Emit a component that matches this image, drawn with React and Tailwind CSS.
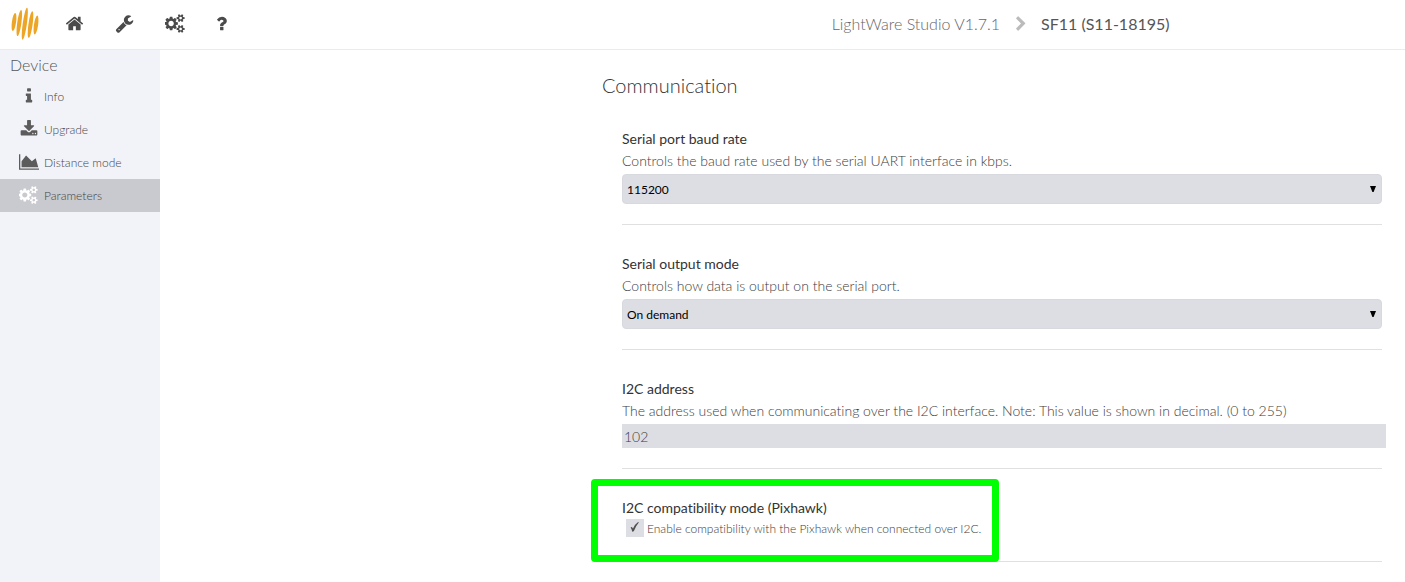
import { useState } from "react";

const ICONS = {
  home: {
    box: "0 0 1792 1792",
    d: "M1472 992v480q0 26-19 45t-45 19h-384v-384h-256v384h-384q-26 0-45-19t-19-45v-480q0-1 .5-3t.5-3l575-474 575 474q1 2 1 6zm223-69l-62 74q-8 9-21 11h-3q-13 0-21-7l-692-577-692 577q-12 8-24 7-13-2-21-11l-62-74q-8-10-7-23.5t11-21.5l719-599q32-26 76-26t76 26l244 204v-195q0-14 9-23t23-9h192q14 0 23 9t9 23v408l219 182q10 8 11 21.5t-7 23.5z",
  },
  wrench: {
    box: "0 0 1792 1792",
    d: "M448 1472q0-26-19-45t-45-19-45 19-19 45 19 45 45 19 45-19 19-45zm644-420l-682 682q-37 37-90 37-52 0-91-37l-106-108q-38-36-38-90 0-53 38-91l681-681q39 98 114.5 173.5t173.5 114.5zm634-435q0 39-23 106-47 134-164.5 217.5t-258.5 83.5q-185 0-316.5-131.5t-131.5-316.5 131.5-316.5 316.5-131.5q58 0 121.5 16.5t107.5 46.5q16 11 16 28t-16 28l-293 169v224l193 107q5-3 79-48.5t135.5-81 70.5-35.5q15 0 23.5 10t8.5 25z",
  },
  cogs: {
    box: "0 0 1920 1792",
    d: "M832 896q0-106-75-181t-181-75-181 75-75 181 75 181 181 75 181-75 75-181zm768 512q0-52-38-90t-90-38-90 38-38 90q0 53 37.5 90.5t90.5 37.5 90.5-37.5 37.5-90.5zm0-1024q0-52-38-90t-90-38-90 38-38 90q0 53 37.5 90.5t90.5 37.5 90.5-37.5 37.5-90.5zm-384 421v185q0 10-7 19.5t-16 10.5l-155 24q-11 35-32 76 34 48 90 115 7 11 7 20 0 12-7 19-23 30-82.5 89.5t-78.5 59.5q-11 0-21-7l-115-90q-37 19-77 31-11 108-23 155-7 24-30 24h-186q-11 0-20-7.5t-10-17.5l-23-153q-34-10-75-31l-118 89q-7 7-20 7-11 0-21-8-144-133-144-160 0-9 7-19 10-14 41-53t47-61q-23-44-35-82l-152-24q-10-1-17-9.5t-7-19.5v-185q0-10 7-19.5t16-10.5l155-24q11-35 32-76-34-48-90-115-7-11-7-20 0-12 7-20 22-30 82-89t79-59q11 0 21 7l115 90q34-18 77-32 11-108 23-154 7-24 30-24h186q11 0 20 7.5t10 17.5l23 153q34 10 75 31l118-89q8-7 20-7 11 0 21 8 144 133 144 160 0 8-7 19-12 16-42 54t-45 60q23 48 34 82l152 23q10 2 17 10.5t7 19.5zm640 533v140q0 16-149 31-12 27-30 52 51 113 51 138 0 4-4 7-122 71-124 71-8 0-46-47t-52-68q-20 2-30 2t-30-2q-14 21-52 68t-46 47q-2 0-124-71-4-3-4-7 0-25 51-138-18-25-30-52-149-15-149-31v-140q0-16 149-31 13-29 30-52-51-113-51-138 0-4 4-7 4-2 35-20t59-34 30-16q8 0 46 46.5t52 67.5q20-2 30-2t30 2q51-71 92-112l6-2q4 0 124 70 4 3 4 7 0 25-51 138 17 23 30 52 149 15 149 31zm0-1024v140q0 16-149 31-12 27-30 52 51 113 51 138 0 4-4 7-122 71-124 71-8 0-46-47t-52-68q-20 2-30 2t-30-2q-14 21-52 68t-46 47q-2 0-124-71-4-3-4-7 0-25 51-138-18-25-30-52-149-15-149-31v-140q0-16 149-31 13-29 30-52-51-113-51-138 0-4 4-7 4-2 35-20t59-34 30-16q8 0 46 46.5t52 67.5q20-2 30-2t30 2q51-71 92-112l6-2q4 0 124 70 4 3 4 7 0 25-51 138 17 23 30 52 149 15 149 31z",
  },
  question: {
    box: "384 0 1024 1792",
    d: "M1088 1256v240q0 16-12 28t-28 12h-240q-16 0-28-12t-12-28v-240q0-16 12-28t28-12h240q16 0 28 12t12 28zm316-600q0 54-15.5 101t-35 76.5-55 59.5-57.5 43.5-61 35.5q-41 23-68.5 65t-27.5 67q0 17-12 32.5t-28 15.5h-240q-15 0-25.5-18.5t-10.5-37.5v-45q0-83 65-156.5t143-108.5q59-27 84-56t25-76q0-42-46.5-74t-107.5-32q-65 0-108 29-35 25-107 115-13 16-31 16-12 0-25-8l-164-125q-13-10-15.5-25t5.5-28q160-266 464-266 80 0 161 31t146 83 106 127.5 41 158.5z",
  },
  info: {
    box: "0 0 1792 1792",
    d: "M1216 1344v128q0 26-19 45t-45 19h-512q-26 0-45-19t-19-45v-128q0-26 19-45t45-19h64v-384h-64q-26 0-45-19t-19-45v-128q0-26 19-45t45-19h384q26 0 45 19t19 45v576h64q26 0 45 19t19 45zm-128-1152v192q0 26-19 45t-45 19h-256q-26 0-45-19t-19-45v-192q0-26 19-45t45-19h256q26 0 45 19t19 45z",
  },
  download: {
    box: "0 0 1792 1792",
    d: "M1344 1344q0-26-19-45t-45-19-45 19-19 45 19 45 45 19 45-19 19-45zm256 0q0-26-19-45t-45-19-45 19-19 45 19 45 45 19 45-19 19-45zm128-224v320q0 40-28 68t-68 28h-1472q-40 0-68-28t-28-68v-320q0-40 28-68t68-28h465l135 136q58 56 136 56t136-56l136-136h464q40 0 68 28t28 68zm-325-569q17 41-14 70l-448 448q-18 19-45 19t-45-19l-448-448q-31-29-14-70 17-39 59-39h256v-448q0-26 19-45t45-19h256q26 0 45 19t19 45v448h256q42 0 59 39z",
  },
  chart: {
    box: "0 0 2048 1792",
    d: "M2048 1536v128h-2048v-1536h128v1408h1920zm-384-1024l256 896h-1664v-576l448-576 576 576z",
  },
  chevron: {
    box: "0 0 1792 1792",
    d: "M1363 877l-742 742q-19 19-45 19t-45-19l-166-166q-19-19-19-45t19-45l531-531-531-531q-19-19-19-45t19-45l166-166q19-19 45-19t45 19l742 742q19 19 19 45t-19 45z",
  },
};

function Icon({ name, className }) {
  const icon = ICONS[name];
  return (
    <svg viewBox={icon.box} className={`w-auto shrink-0 fill-current ${className}`} aria-hidden="true">
      <path d={icon.d} />
    </svg>
  );
}

function Logo() {
  const bars = [
    [5, 17, 9.2],
    [10.3, 18, 13.2],
    [15.8, 18.7, 16.2],
    [21.5, 19.5, 13.5],
    [27, 20, 9.5],
  ];
  return (
    <svg viewBox="0 0 32 37" className="h-[37px] w-8" aria-hidden="true">
      {bars.map(([x, y, r]) => (
        <ellipse key={x} cx={x} cy={y} rx="2.1" ry={r} fill="#eda528" transform={`rotate(8 ${x} ${y})`} />
      ))}
    </svg>
  );
}

const TOOLS = [
  ["home", "Home"],
  ["wrench", "Tools"],
  ["cogs", "Settings"],
  ["question", "Help"],
];

const MENU = [
  ["info", "Info"],
  ["download", "Upgrade"],
  ["chart", "Distance mode"],
  ["cogs", "Parameters"],
];

function Setting({ id, title, description, children }) {
  return (
    <div className="relative border-b border-[#e0e0e0] pt-7 pb-5">
      <label htmlFor={id} className="block text-sm leading-[22px] text-[#333]">
        {title}
      </label>
      {description && (
        <p className="mb-0.5 text-sm leading-[22px] font-light text-[#3c3c3c]">{description}</p>
      )}
      {children}
    </div>
  );
}

function Dropdown({ id, options }) {
  return (
    <div className="relative">
      <select
        id={id}
        className="block h-[30px] w-full appearance-none rounded-[4px] border border-[#d8d9de] bg-[#dddee4] px-1 pt-0.5 text-xs text-black"
      >
        {options.map((o) => (
          <option key={o}>{o}</option>
        ))}
      </select>
      <svg viewBox="0 0 6 6" className="pointer-events-none absolute top-3 right-1.5 size-1.5" aria-hidden="true">
        <path d="M0 0h6L3.6 6H2.4z" />
      </svg>
    </div>
  );
}

export default function App() {
  const [address, setAddress] = useState("102");
  const [compatible, setCompatible] = useState(true);
  return (
    <div className="flex h-screen flex-col overflow-hidden bg-white font-[Lato,sans-serif] [font-variant-ligatures:none]">
      <header className="flex h-[50px] shrink-0 items-center border-b border-[#ebebeb] pb-0.5 text-[#4a4a4a]">
        <div className="flex w-[50px] justify-center">
          <Logo />
        </div>
        <nav className="flex gap-px">
          {TOOLS.map(([icon, label]) => (
            <button key={icon} type="button" aria-label={label} className="flex h-11 items-center px-[15px]">
              <Icon name={icon} className="h-[19px]" />
            </button>
          ))}
        </nav>
        <div className="flex flex-1 items-center justify-center pl-[354px] text-base">
          <span className="font-light text-[#666]">LightWare Studio V1.7.1</span>
          <span className="flex w-[41px] justify-center text-[#bbb]">
            <Icon name="chevron" className="h-4" />
          </span>
          <span className="text-[#555]">SF11 (S11-18195)</span>
        </div>
      </header>
      <div className="flex min-h-0 flex-1">
        <aside className="w-40 shrink-0 bg-[#f2f3f9] text-[#444]">
          <h2 className="px-2.5 text-base leading-[30px] font-light text-[#555]">Device</h2>
          <nav>
            {MENU.map(([icon, label]) => {
              const active = label === "Parameters";
              return (
                <a
                  key={label}
                  href={`#${label.toLowerCase().replace(" ", "-")}`}
                  aria-current={active ? "page" : undefined}
                  className={`flex h-[33px] items-center pl-[15px] text-xs font-light ${active ? "bg-[#c9cacf]" : ""}`}
                >
                  <span className={`mr-px flex w-7 justify-center pb-0.5 ${active ? "text-white" : "text-[#5c5c5c]"}`}>
                    <Icon name={icon} className="h-[18px]" />
                  </span>
                  {label}
                </a>
              );
            })}
          </nav>
        </aside>
        <main className="min-w-0 flex-1 overflow-hidden pr-[23px]">
          <section className="ml-auto max-w-[780px]">
            <h1 className="pt-5 text-xl leading-[30px] font-light text-[#333]">Communication</h1>
            <div className="pl-5">
              <Setting
                id="baud"
                title="Serial port baud rate"
                description="Controls the baud rate used by the serial UART interface in kbps."
              >
                <Dropdown id="baud" options={["115200"]} />
              </Setting>
              <Setting
                id="output"
                title="Serial output mode"
                description="Controls how data is output on the serial port."
              >
                <Dropdown id="output" options={["On demand"]} />
              </Setting>
              <Setting
                id="address"
                title="I2C address"
                description="The address used when communicating over the I2C interface. Note: This value is shown in decimal. (0 to 255)"
              >
                <input
                  id="address"
                  type="text"
                  value={address}
                  onChange={(e) => setAddress(e.target.value)}
                  className="block h-6 w-[calc(100%+4px)] bg-[#dddee4] px-0.5 text-sm font-light text-[#3c3c3c]"
                />
              </Setting>
              <Setting id="compat" title="I2C compatibility mode (Pixhawk)">
                <div className="flex h-[22px] items-start pl-1">
                  <span className="relative size-[18px]">
                    <input
                      id="compat"
                      type="checkbox"
                      checked={compatible}
                      onChange={(e) => setCompatible(e.target.checked)}
                      className="block size-[18px] appearance-none bg-[#dddee4]"
                    />
                    {compatible && (
                      <svg viewBox="0 0 18 18" className="pointer-events-none absolute inset-0" aria-hidden="true">
                        <path d="M4.6 8.4Q6 7.200 7 9.600Q8.800 5.300 11.800 3.300L13 3.300Q9.700 7 7.800 12.300L6.200 12.700Q5.900 10 4.600 8.400z" fill="#505050" />
                      </svg>
                    )}
                  </span>
                  <label htmlFor="compat" className="pl-[3px] text-xs leading-5 font-light text-[#3c3c3c]">
                    Enable compatibility with the Pixhawk when connected over I2C.
                  </label>
                </div>
                <div className="pointer-events-none absolute top-2.5 -bottom-px -left-[31px] w-[408px] rounded-[4px] border-[7px] border-[#00ff00]" />
              </Setting>
            </div>
          </section>
        </main>
      </div>
    </div>
  );
}
